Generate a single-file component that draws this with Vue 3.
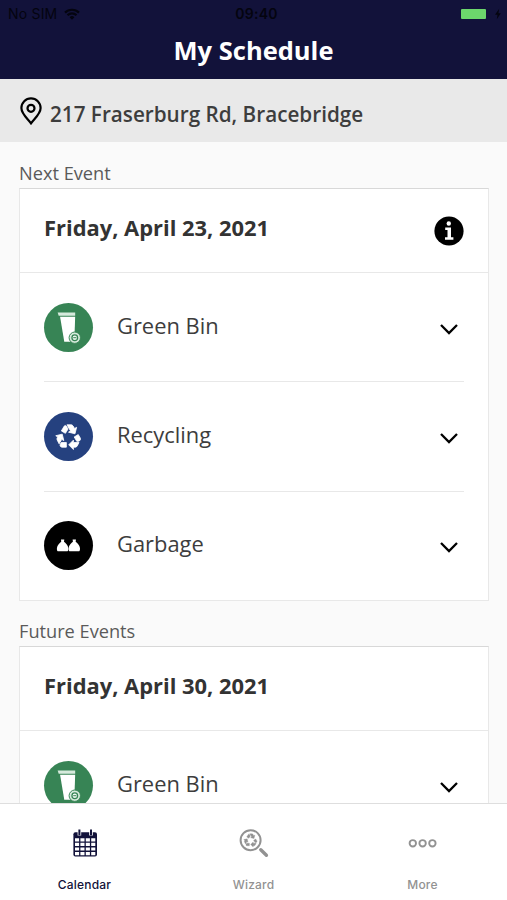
<template>
  <div class="screen">
    <header class="header">
      <div class="status-bar">
        <div class="carrier">
          <span>No SIM</span>
          <svg class="wifi" viewBox="0 0 16 12">
            <path d="M1 4.6a10 10 0 0 1 14 0M3.5 7.2a6.4 6.4 0 0 1 9 0" fill="none" stroke="currentColor" stroke-width="2.2" />
            <path d="M5.6 9.3a3.4 3.4 0 0 1 4.8 0L8 11.8z" fill="currentColor" />
          </svg>
        </div>
        <span class="clock">09:40</span>
        <div class="power">
          <span class="battery"></span>
          <svg class="bolt" viewBox="0 0 8 12">
            <path d="M5.2 0.7 1 6.8h2.5L2.8 11.3 6.8 5.2H4.4z" fill="currentColor" />
          </svg>
        </div>
      </div>
      <h1 class="title">My Schedule</h1>
    </header>

    <div class="address">
      <svg class="pin" viewBox="0 0 22 28">
        <path d="M11 26.3C8 22 1.4 17 1.4 11a9.6 9.6 0 0 1 19.2 0c0 6-6.6 11-9.6 15.3z" />
        <circle cx="11" cy="11.3" r="3.5" />
      </svg>
      <span>217 Fraserburg Rd, Bracebridge</span>
    </div>

    <main class="content">
      <section v-for="group in groups" :key="group.label" class="group">
        <h2 class="group-label">{{ group.label }}</h2>
        <div class="card">
          <div class="card-header">
            <span class="date">{{ group.date }}</span>
            <svg v-if="group.info" class="info" viewBox="0 0 30 30">
              <circle cx="15" cy="15" r="14.6" />
              <circle cx="14.8" cy="7.5" r="2.2" fill="#fff" />
              <path d="M11.2 11.4H17v9.8h2.4v2.5H11v-2.5h2.5v-7.3h-2.3z" fill="#fff" />
            </svg>
          </div>
          <div v-for="item in group.items" :key="item.name" class="row">
            <div class="badge" :class="item.icon">
              <svg v-if="item.icon === 'green-bin'" viewBox="0 0 50 50">
                <path d="M13.9 9.7h17.9v3.4H15z" fill="#d6eadc" />
                <path d="M16.4 14h15.4l-.6 18-4.2 7.6h-6.3z" fill="#fff" />
                <circle cx="31.4" cy="35.4" r="5.8" fill="#d6eadc" stroke="#378455" />
                <circle cx="31.4" cy="35.4" r="2.9" fill="#eef7f0" stroke="#378455" stroke-width="1.3" />
                <path d="M29.8 35.4H33" stroke="#378455" />
              </svg>
              <svg v-else-if="item.icon === 'recycling'" viewBox="0 0 50 50">
                <path
                  :d="recyclePath"
                  fill="#fff"
                  stroke="#fff"
                  stroke-width="0.7"
                  stroke-linejoin="round"
                  transform="translate(10.8 10.7) scale(1.2)"
                />
              </svg>
              <svg v-else viewBox="0 0 50 50">
                <path :d="bagPath" fill="#fff" />
                <path :d="bagPath" fill="#fff" transform="translate(11.9 0)" />
              </svg>
            </div>
            <span class="name">{{ item.name }}</span>
            <svg class="chevron" viewBox="0 0 20 12">
              <path d="M2 2l8 8 8-8" />
            </svg>
          </div>
        </div>
      </section>
    </main>

    <nav class="tabs">
      <div class="tab active">
        <svg class="tab-icon" viewBox="0 0 30 30">
          <rect x="3.4" y="4.2" width="23.6" height="24.2" rx="2" fill="currentColor" />
          <path d="M9.4 2v5.5M21 2v5.5" stroke="#fff" stroke-width="3.6" />
          <path d="M9.4 1.6v5.6M21 1.6v5.6" stroke="currentColor" stroke-width="2" />
          <path
            v-for="y in [10.2, 14.8, 19.4, 24]"
            :key="y"
            :d="`M5 ${y}h4.1v3.2H5zM10.4 ${y}h4.1v3.2h-4.1zM15.8 ${y}h4.1v3.2h-4.1zM21.2 ${y}h4.1v3.2h-4.1z`"
            fill="#fff"
          />
        </svg>
        <span>Calendar</span>
      </div>
      <div class="tab">
        <svg class="tab-icon" viewBox="0 0 30 30">
          <circle cx="11.6" cy="12.2" r="10" fill="none" stroke="currentColor" stroke-width="2" />
          <path
            :d="recyclePath"
            fill="currentColor"
            stroke="currentColor"
            stroke-width="0.5"
            transform="translate(4.1 4.5) scale(0.63)"
          />
          <path d="M21.8 21.8l5.6 5.4" stroke="currentColor" stroke-width="3.4" stroke-linecap="round" />
        </svg>
        <span>Wizard</span>
      </div>
      <div class="tab">
        <svg class="tab-icon" viewBox="0 0 30 30">
          <g fill="none" stroke="currentColor" stroke-width="1.9">
            <circle cx="4.8" cy="15.3" r="3.2" />
            <circle cx="14.6" cy="15.3" r="3.2" />
            <circle cx="24.4" cy="15.3" r="3.2" />
          </g>
        </svg>
        <span>More</span>
      </div>
    </nav>
  </div>
</template>

<script setup>
const groups = [
  {
    label: "Next Event",
    date: "Friday, April 23, 2021",
    info: true,
    items: [
      { name: "Green Bin", icon: "green-bin" },
      { name: "Recycling", icon: "recycling" },
      { name: "Garbage", icon: "garbage" },
    ],
  },
  {
    label: "Future Events",
    date: "Friday, April 30, 2021",
    info: false,
    items: [{ name: "Green Bin", icon: "green-bin" }],
  },
];

const recyclePath =
  "M5.77 7.15 7.2 4.78l1.03-1.71c.39-.65 1.33-.65 1.72 0l1.48 2.46-1.23 2.06-1 1.62-3.43-2.06zm15.95 5.82-1.6-2.66-3.46 2L18.87 16H20c.76 0 1.45-.43 1.79-1.11.14-.28.21-.58.21-.89 0-.36-.1-.71-.28-1.03zM16 21h1.5c.76 0 1.45-.43 1.79-1.11L20.74 17H16v-2l-4 4 4 4v-2zm-6-4H5.7l-.84 1.41c-.3.5-.32 1.12-.06 1.65.28.57.87.94 1.52.94H10v-4zm-3.88-2.65 1.73 1.04L6.48 9.9 1 11.27l1.7 1.02-.41.69c-.35.59-.38 1.31-.07 1.92l1.63 3.26 2.27-3.81zm10.9-9.21-1.3-2.17C15.35 2.37 14.7 2 14 2h-3.53l3.12 5.2-1.72 1.03 5.49 1.37 1.37-5.49-1.71 1.03z";

const bagPath =
  "M17.3 18.8h3.4l-.3 2.4c1.4 1.3 4.2 3.3 4.4 6.4.1 1.5 0 3.2-.8 3.2H14c-.8 0-.9-1.7-.8-3.2.2-3.1 3-5.100 4.400-6.400z";
</script>

<style scoped>
.screen {
  display: flex;
  flex-direction: column;
  width: 507px;
  height: 900px;
  overflow: hidden;
  background: #fafafa;
  color: #3d3d3d;
  font-family: "Open Sans", "Noto Sans", sans-serif;
}

svg {
  display: block;
  flex-shrink: 0;
}

/* header */
.header {
  flex-shrink: 0;
  height: 79px;
  background: #12123a;
}

.status-bar {
  display: grid;
  grid-template-columns: 1fr auto 1fr;
  align-items: center;
  height: 27px;
  padding: 0 5px 0 8px;
  color: #04040f;
  font-family: Inter, sans-serif;
  font-size: 14px;
}

.carrier {
  display: flex;
  align-items: center;
  gap: 7px;
  letter-spacing: 0.2px;
}

.wifi {
  width: 16px;
  height: 12px;
}

.clock {
  margin-left: 3px;
  font-weight: 600;
  letter-spacing: 0.3px;
}

.power {
  display: flex;
  align-items: center;
  justify-content: flex-end;
  gap: 8px;
}

.battery {
  width: 25px;
  height: 10px;
  border-radius: 1px;
  background: #6cd66c;
}

.bolt {
  width: 8px;
  height: 12px;
}

.title {
  margin: 0;
  color: #fff;
  font-size: 25.5px;
  font-weight: 700;
  line-height: 47px;
  text-align: center;
}

.address {
  display: flex;
  flex-shrink: 0;
  align-items: center;
  gap: 8px;
  height: 63px;
  padding: 6px 20px 0;
  box-sizing: border-box;
  background: #e9e9e9;
  font-size: 20.7px;
  font-weight: 600;
}

.pin {
  width: 22px;
  height: 28px;
  margin-bottom: 5px;
  fill: none;
  stroke: #000;
  stroke-width: 2.2;
}

/* events */
.content {
  flex: 1;
  min-height: 0;
  overflow: hidden;
  padding: 17px 18px 0 19px;
}

.group {
  margin-bottom: 16px;
}

.group-label {
  margin: 0;
  height: 29px;
  color: #5a5a5a;
  font-size: 18.2px;
  font-weight: 400;
  line-height: 28px;
}

.card {
  box-sizing: border-box;
  border: 1px solid #e8e8e8;
  border-top-color: #d8d8d8;
  background: #fff;
}

.card-header {
  display: flex;
  align-items: center;
  justify-content: space-between;
  height: 83px;
  padding: 0 24px;
  border-bottom: 1px solid #e8e8e8;
}

.date {
  margin-bottom: 6px;
  color: #333;
  font-size: 21.9px;
  font-weight: 700;
}

.info {
  width: 30px;
  height: 30px;
}

.row {
  display: flex;
  align-items: center;
  height: 108.4px;
  margin: 0 24px;
  border-bottom: 1px solid #e8e8e8;
}

.row:last-child {
  border-bottom: none;
}

.badge {
  width: 49px;
  height: 49px;
  border-radius: 50%;
}

.green-bin {
  background: #378455;
}

.recycling {
  background: #25417f;
}

.garbage {
  background: #000;
}

.name {
  flex: 1;
  margin: 0 0 4px 24px;
  font-size: 21.9px;
}

.chevron {
  width: 20px;
  height: 12px;
  margin: 3px 5px 0 0;
  fill: none;
  stroke: #000;
  stroke-width: 2.3;
}

/* tab bar */
.tabs {
  display: flex;
  flex-shrink: 0;
  height: 97px;
  box-sizing: border-box;
  border-top: 1px solid #dedede;
  background: #fff;
}

.tab {
  display: flex;
  flex: 1;
  flex-direction: column;
  align-items: center;
  padding-top: 24px;
  color: #929292;
  font-family: Inter, sans-serif;
  font-size: 12px;
  font-weight: 500;
  letter-spacing: 0.2px;
}

.tab-icon {
  width: 30px;
  height: 30px;
  margin-bottom: 19px;
}

.tab.active {
  color: #12123a;
}
</style>
